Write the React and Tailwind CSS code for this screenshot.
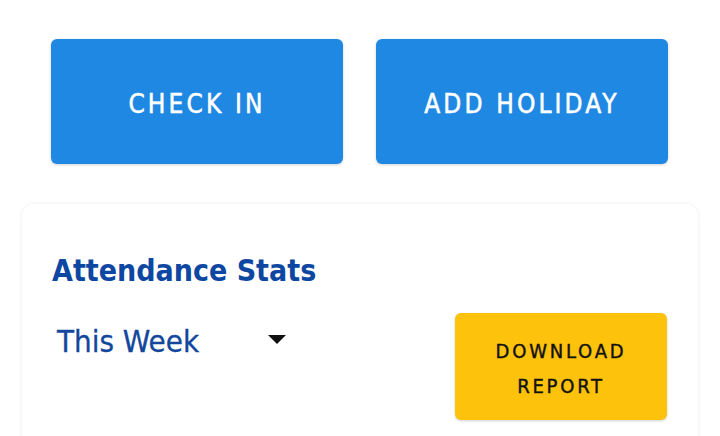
import React from "react";

export default function App() {
  const font = { fontFamily: '"DejaVu Sans Condensed", "DejaVu Sans", sans-serif' };
  return (
    <div className="w-[720px] h-[436px] bg-white overflow-hidden" style={font}>
      <div className="flex gap-[33px] pl-[51px] pt-[39px]">
        <button className="w-[292px] h-[125px] pt-[5px] rounded-[6px] bg-[#1f88e3] text-white text-[26px] tracking-[0.12em] [-webkit-text-stroke:0.5px_white] shadow-[0_1px_3px_rgba(0,0,0,0.18)] flex items-center justify-center">
          CHECK IN
        </button>
        <button className="w-[292px] h-[125px] pt-[5px] rounded-[6px] bg-[#1f88e3] text-white text-[26px] tracking-[0.12em] [-webkit-text-stroke:0.5px_white] shadow-[0_1px_3px_rgba(0,0,0,0.18)] flex items-center justify-center">
          ADD HOLIDAY
        </button>
      </div>
      <div className="mt-[40px] mx-[22px] rounded-[12px] bg-white shadow-[0_0_4px_rgba(0,0,0,0.08)] h-[260px] pl-[30px] pr-[31px] pt-[47px]">
        <div className="text-[30px] font-bold text-[#0d47a1] leading-[40px]">Attendance Stats</div>
        <div className="flex justify-between mt-[22px]">
          <div className="flex items-start pt-[10px]">
            <span className="text-[31px] text-[#13479c] leading-[36px] pl-[5px] [-webkit-text-stroke:0.3px_#13479c]">This Week</span>
            <svg className="ml-[69px] mt-[12px]" width="18" height="10" viewBox="0 0 18 10">
              <path d="M0 0 L18 0 L9 9 Z" fill="#111" />
            </svg>
          </div>
          <button className="w-[212px] h-[107px] pt-[4px] rounded-[6px] bg-[#fdc20b] text-[#111] text-[20px] tracking-[0.14em] leading-[35px] [-webkit-text-stroke:0.4px_#111] shadow-[0_1px_3px_rgba(0,0,0,0.18)] flex flex-col items-center justify-center">
            <span>DOWNLOAD</span>
            <span>REPORT</span>
          </button>
        </div>
      </div>
    </div>
  );
}
